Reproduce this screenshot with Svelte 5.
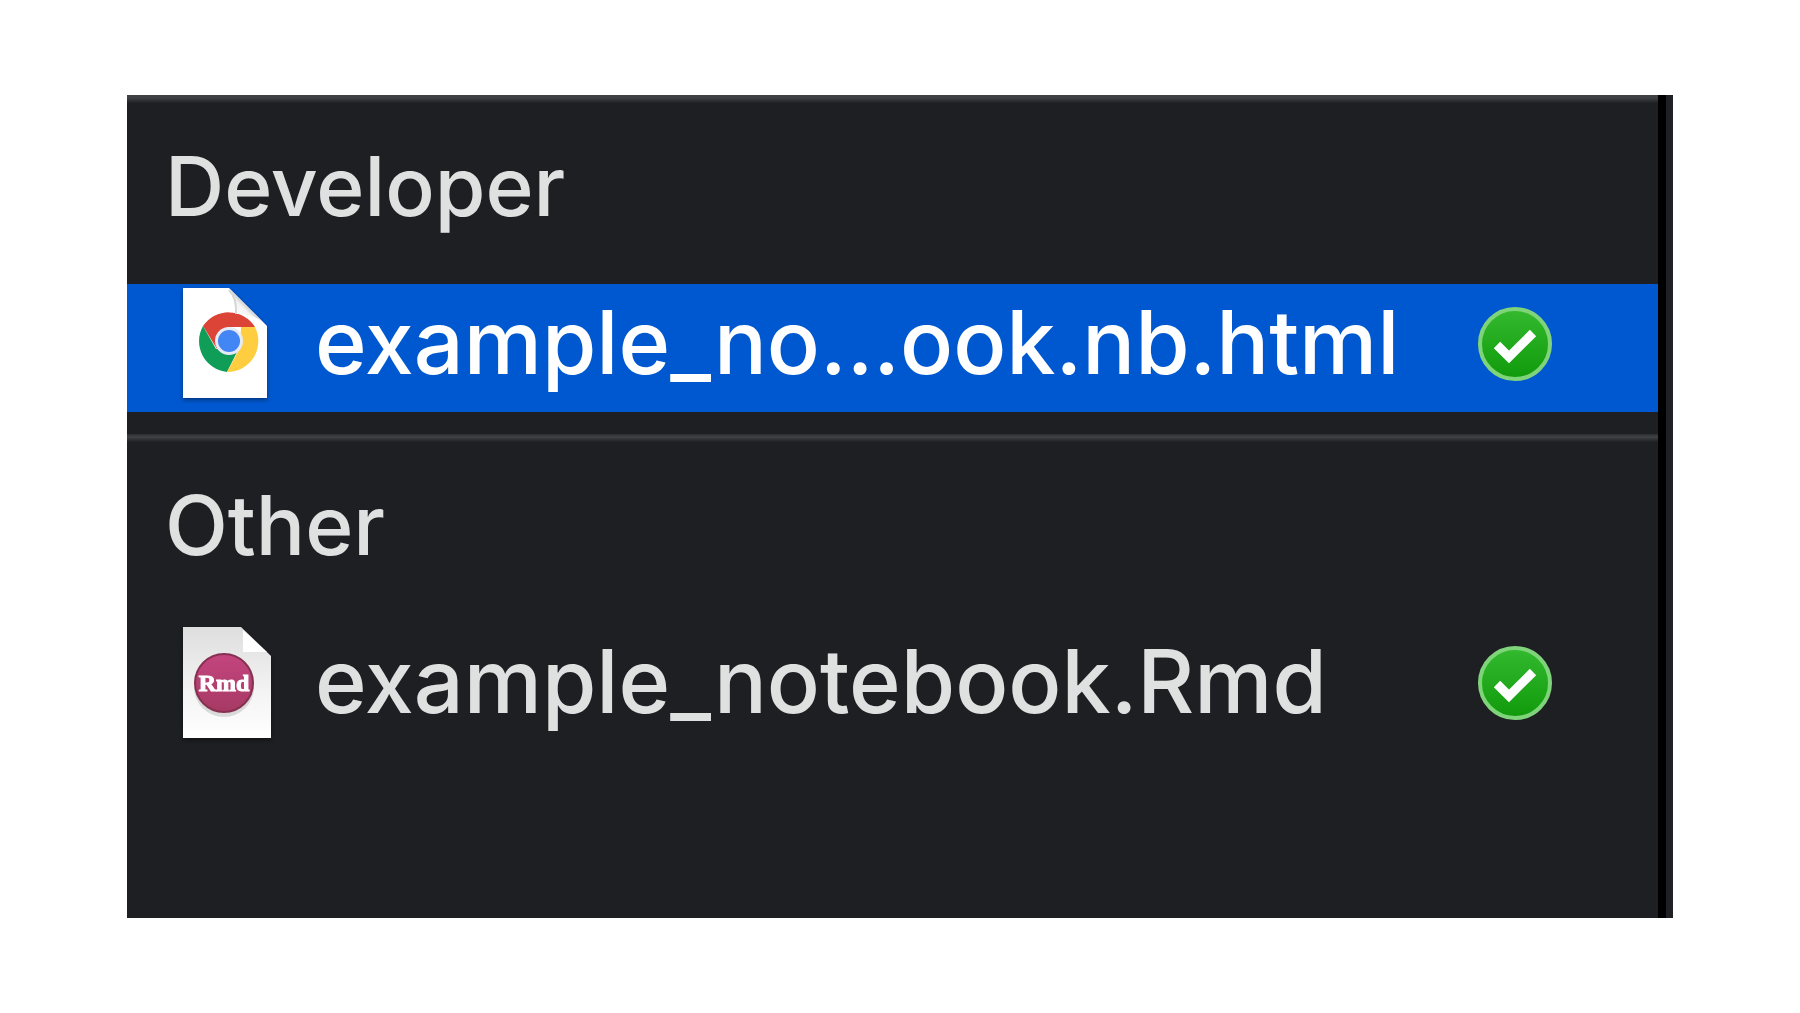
<script>
  const sections = [
    { title: 'Developer', files: [{ name: 'example_no...ook.nb.html', kind: 'html', synced: true }] },
    { title: 'Other', files: [{ name: 'example_notebook.Rmd', kind: 'rmd', synced: true }] },
  ];
  let selected = $state('example_no...ook.nb.html');
</script>

<main>
  <div class="window">
    <div class="list">
      {#each sections as section}
        <section>
          <h2>{section.title}</h2>
          <ul>
            {#each section.files as file}
              <li>
                <button
                  class="row"
                  class:selected={selected === file.name}
                  aria-pressed={selected === file.name}
                  onclick={() => (selected = file.name)}
                >
                  {#if file.kind === 'html'}
                    <svg class="doc" viewBox="0 0 88 112" aria-hidden="true">
                      <defs>
                        <linearGradient id="fold-a" x1="0" y1="1" x2="1" y2="0">
                          <stop offset="0.2" stop-color="#fff" />
                          <stop offset="0.42" stop-color="#f4f4f4" />
                          <stop offset="0.5" stop-color="#cfcfcf" />
                          <stop offset="0.58" stop-color="#fff" />
                        </linearGradient>
                      </defs>
                      <path d="M0 0H46L84 38V110H0Z" fill="#fff" />
                      <path d="M20 38A31 31 0 0 1 72 39H45L34 61Z" fill="#db4437" />
                      <path d="M20 38A31 31 0 0 0 44 84L55 62L33 61Z" fill="#0f9d58" />
                      <path d="M72 39A31 31 0 0 1 44 84L57 60L58 39Z" fill="#ffcd40" />
                      <path d="M46 0Q55 10 53 26Q72 25 84 38Z" fill="url(#fold-a)" />
                      <path d="M46 2Q54 10 53 26" fill="none" stroke="#d6d6d6" stroke-width="2" />
                      <circle cx="46" cy="53" r="14" fill="#e6eaf4" />
                      <circle cx="46" cy="53" r="11" fill="#4285f4" />
                    </svg>
                  {:else}
                    <svg class="doc" viewBox="0 0 88 112" aria-hidden="true">
                      <defs>
                        <linearGradient id="paper-b" x1="0" y1="0" x2="0" y2="1">
                          <stop offset="0" stop-color="#dedede" />
                          <stop offset="0.6" stop-color="#f4f4f4" />
                          <stop offset="1" stop-color="#fff" />
                        </linearGradient>
                        <linearGradient id="disc-b" x1="0" y1="0" x2="0" y2="1">
                          <stop offset="0" stop-color="#c4457f" />
                          <stop offset="1" stop-color="#a63a64" />
                        </linearGradient>
                      </defs>
                      <path d="M0 0H58L88 29V111H0Z" fill="url(#paper-b)" />
                      <path d="M60 3V25H84Z" fill="#fff" />
                      <circle cx="41" cy="60" r="30" fill="#000" opacity="0.12" />
                      <circle cx="41" cy="56" r="29" fill="url(#disc-b)" stroke="#87304f" stroke-width="2" />
                      <text x="41" y="64" text-anchor="middle">Rmd</text>
                    </svg>
                  {/if}
                  <span class="name">{file.name}</span>
                  {#if file.synced}
                    <svg class="badge" viewBox="0 0 76 76" role="img" aria-label="Synced">
                      <defs>
                        <linearGradient id="ok-{file.kind}" x1="0" y1="0" x2="0" y2="1">
                          <stop offset="0" stop-color="#34b92f" />
                          <stop offset="1" stop-color="#109a0b" />
                        </linearGradient>
                      </defs>
                      <circle cx="38" cy="38" r="35" fill="url(#ok-{file.kind})" stroke="#7fd47a" stroke-width="4" />
                      <path d="M20 39L32 51L56 27" fill="none" stroke="#fff" stroke-width="9" />
                    </svg>
                  {/if}
                </button>
              </li>
            {/each}
          </ul>
        </section>
      {/each}
    </div>
  </div>
</main>

<style>
  :global(body) {
    background: #fff;
  }

  main {
    box-sizing: border-box;
    min-height: 100vh;
    padding: 95px 127px;
    display: flex;
    font-family: Inter, 'Liberation Sans', sans-serif;
  }

  .window {
    flex: 1;
    min-width: 0;
    padding-right: 7px;
    background: #1f2024;
  }

  .list {
    box-sizing: border-box;
    height: 100%;
    border-right: 8px solid #000;
    background: #1e1f23;
  }

  section {
    padding-bottom: 22px;
    background: linear-gradient(#3e4042 3px, #1e1f23 8px);
  }

  section + section {
    background: linear-gradient(#2c2d31, #414246 3px, #1e1f23 8px);
  }

  h2 {
    margin: 0;
    padding: 42px 38px 47px;
    font-size: 82px;
    line-height: 100px;
    font-weight: 500;
    color: #dfe0e0;
  }

  ul {
    margin: 0;
    padding: 0;
    list-style: none;
  }

  .row {
    box-sizing: border-box;
    width: 100%;
    height: 128px;
    padding: 0 105px 8px 56px;
    display: flex;
    align-items: center;
    border: 0;
    background: none;
    color: #dfe0e0;
    font: inherit;
    font-size: 88px;
    font-weight: 500;
    line-height: 104px;
    text-align: left;
  }

  .row.selected {
    background: #0058d0;
    color: #fff;
  }

  .doc {
    width: 88px;
    height: 112px;
    margin-right: 44px;
    flex: none;
    filter: drop-shadow(0 2px 2px rgb(0 0 0 / 0.4));
  }

  .doc text {
    font: 700 24px 'Liberation Serif', serif;
    fill: #fff;
    stroke: #fff;
    stroke-width: 1px;
  }

  .name {
    flex: 1;
    padding-bottom: 4px;
    white-space: nowrap;
  }

  .badge {
    width: 76px;
    height: 76px;
    flex: none;
  }
</style>
